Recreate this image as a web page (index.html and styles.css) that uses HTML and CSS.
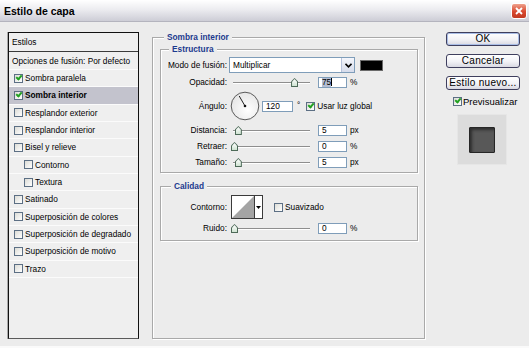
FILE: index.html
```html
<!DOCTYPE html>
<html lang="es">

<head>
  <meta charset="UTF-8" />
  <title>Estilo de capa</title>
  <link rel="stylesheet" href="styles.css">
</head>

<body>
  <!-- Barra de título -->
  <div class="titlebar">
    <span class="title">Estilo de capa</span>
    <span class="close">
      <svg width="8" height="8" viewBox="0 0 8 8"><path d="M1 1L7 7M7 1L1 7" stroke="#fff" stroke-width="1.8" /></svg>
    </span>
  </div>

  <div class="dialog">
    <!-- Lista de estilos -->
    <ul class="styles-list">
      <li class="head">Estilos</li>
      <li class="blend">Opciones de fusión: Por defecto</li>
      <li><span class="cb checked"></span>Sombra paralela</li>
      <li class="active"><span class="cb checked"></span>Sombra interior</li>
      <li><span class="cb"></span>Resplandor exterior</li>
      <li><span class="cb"></span>Resplandor interior</li>
      <li><span class="cb"></span>Bisel y relieve</li>
      <li class="sub"><span class="cb"></span>Contorno</li>
      <li class="sub"><span class="cb"></span>Textura</li>
      <li><span class="cb"></span>Satinado</li>
      <li><span class="cb"></span>Superposición de colores</li>
      <li><span class="cb"></span>Superposición de degradado</li>
      <li><span class="cb"></span>Superposición de motivo</li>
      <li><span class="cb"></span>Trazo</li>
    </ul>

    <!-- Panel central -->
    <fieldset class="group main">
      <legend>Sombra interior</legend>

      <fieldset class="group structure">
        <legend>Estructura</legend>
        <div class="rows">
          <div class="row tall">
            <label>Modo de fusión:</label>
            <div class="select">
              <span class="value">Multiplicar</span>
              <span class="arrow">
                <svg width="7" height="5" viewBox="0 0 7 5"><path d="M0.5 0.8L3.5 3.8L6.5 0.8" fill="none" stroke="#000" stroke-width="1.6" /></svg>
              </span>
            </div>
            <span class="swatch"></span>
          </div>

          <div class="row">
            <label>Opacidad:</label>
            <div class="slider"><span class="thumb" style="left: 78%"></span></div>
            <span class="field"><span class="sel">75</span><span class="caret"></span></span>
            <span class="unit">%</span>
          </div>

          <div class="row dial-row">
            <label>Ángulo:</label>
            <svg class="dial" width="30" height="30" viewBox="0 0 30 30">
              <defs>
                <radialGradient id="dialFill" cx="0.6" cy="0.65" r="0.7">
                  <stop offset="0" stop-color="#ffffff" />
                  <stop offset="1" stop-color="#e4e4e4" />
                </radialGradient>
              </defs>
              <circle cx="15" cy="15" r="13.8" fill="url(#dialFill)" stroke="#5a5a5a" stroke-width="1" />
              <line x1="15" y1="15" x2="9.2" y2="5" stroke="#222" stroke-width="1" />
              <circle cx="15" cy="15" r="1.3" fill="#111" />
            </svg>
            <span class="field angle">120</span>
            <span class="degree">°</span>
            <span class="cb checked"></span>
            <span class="cb-text">Usar luz global</span>
          </div>

          <div class="row">
            <label>Distancia:</label>
            <div class="slider"><span class="thumb" style="left: 5%"></span></div>
            <span class="field">5</span>
            <span class="unit">px</span>
          </div>

          <div class="row">
            <label>Retraer:</label>
            <div class="slider"><span class="thumb" style="left: 0%"></span></div>
            <span class="field">0</span>
            <span class="unit">%</span>
          </div>

          <div class="row">
            <label>Tamaño:</label>
            <div class="slider"><span class="thumb" style="left: 5%"></span></div>
            <span class="field">5</span>
            <span class="unit">px</span>
          </div>
        </div>
      </fieldset>

      <fieldset class="group quality">
        <legend>Calidad</legend>
        <div class="rows">
          <div class="row contour-row">
            <label>Contorno:</label>
            <div class="contour">
              <svg width="22" height="22" viewBox="0 0 22 22">
                <rect width="22" height="22" fill="#fff" />
                <polygon points="0,22 22,0 22,22" fill="#a4a4a4" />
              </svg>
              <span class="contour-arrow">
                <svg width="5" height="3" viewBox="0 0 5 3"><polygon points="0,0 5,0 2.5,3" fill="#000" /></svg>
              </span>
            </div>
            <span class="cb smooth"></span>
            <span class="cb-text">Suavizado</span>
          </div>

          <div class="row">
            <label>Ruido:</label>
            <div class="slider"><span class="thumb" style="left: 0%"></span></div>
            <span class="field">0</span>
            <span class="unit">%</span>
          </div>
        </div>
      </fieldset>
    </fieldset>

    <!-- Botones -->
    <div class="actions">
      <button class="btn default">OK</button>
      <button class="btn">Cancelar</button>
      <button class="btn">Estilo nuevo...</button>
      <div class="preview-toggle"><span class="cb checked"></span>Previsualizar</div>
      <div class="preview">
        <span class="preview-square"></span>
      </div>
    </div>
  </div>
</body>

</html>
```

FILE: styles.css
```css
/* --- Variables --- */
:root {
  --bg: #ececec;
  --text: #000000;
  --legend: #1c3a8e;
  --field-border: #7f9db9;
  --etch-dark: #a9a9a9;
}

* {
  box-sizing: border-box;
}

body {
  margin: 0;
  width: 529px;
  height: 348px;
  overflow: hidden;
  background: var(--bg);
  font-family: "Liberation Sans", Arial, sans-serif;
  font-size: 8.3px;
  color: var(--text);
  border-bottom: 2px solid #fafafa;
}

/* --- Barra de título --- */
.titlebar {
  height: 22px;
  display: flex;
  align-items: center;
  justify-content: space-between;
  padding: 0 2px 0 4px;
  background: linear-gradient(#ffffff, #ececf0 45%, #cdcdd6);
  border-bottom: 1px solid #b4b4be;
}

.title {
  font-size: 10.5px;
  font-weight: bold;
  color: #000;
}

.close {
  width: 16px;
  height: 16px;
  border: 1px solid #fff;
  border-radius: 3px;
  background: linear-gradient(#eea08c, #d9482e 55%, #c23a22);
  display: flex;
  align-items: center;
  justify-content: center;
}

/* --- Layout --- */
.dialog {
  display: flex;
  align-items: flex-start;
  padding: 10px 8px 0 8px;
}

/* --- Lista de estilos --- */
.styles-list {
  list-style: none;
  margin: 0;
  padding: 0;
  width: 131px;
  height: 307px;
  background: #efefef;
  border: 1px solid #111;
  border-bottom-color: #5a5a5a;
  box-shadow: -1px 0 0 #a8a8a8;
}

.styles-list li {
  height: 17.33px;
  display: flex;
  align-items: center;
  gap: 2px;
  padding-left: 5px;
  border-bottom: 1px solid #fbfbfb;
  white-space: nowrap;
}

.styles-list li.head {
  height: 19px;
  padding-left: 3px;
  border-bottom-color: #3a3a3a;
}

.styles-list li.blend {
  height: 18px;
  padding-left: 3px;
}

.styles-list li.active {
  background: #c3c3cd;
  font-weight: bold;
}

.styles-list li.sub {
  padding-left: 15px;
}

/* --- Casillas --- */
.cb {
  flex: none;
  width: 9px;
  height: 9px;
  border: 1px solid #5c6f84;
  background: linear-gradient(135deg, #dcdcd6, #ffffff);
  display: inline-flex;
  align-items: center;
  justify-content: center;
}

.cb.checked::after {
  content: "";
  width: 2px;
  height: 4px;
  margin-top: -2px;
  border: solid #21a121;
  border-width: 0 2px 2px 0;
  transform: rotate(40deg);
}

.cb-text {
  margin-left: 2px;
  white-space: nowrap;
}

/* --- Grupos (fieldset) --- */
.group {
  margin: 0;
  min-width: 0;
  border: 1px solid var(--etch-dark);
  box-shadow: inset 1px 1px 0 #fff, 1px 1px 0 #fff;
}

.group legend {
  padding: 0 3px;
  margin-left: 4px;
  line-height: 11px;
  color: var(--legend);
  font-weight: bold;
  background: var(--bg);
}

.main {
  margin-left: 13px;
  width: 273px;
  height: 307px;
  padding: 1px 6px 0 7px;
}

.structure {
  padding: 2px 4px 3px;
}

.quality {
  margin-top: 8px;
  padding: 3px 4px 5px;
}

.quality legend {
  margin-left: 6px;
}

/* --- Filas de controles --- */
.rows {
  display: flex;
  flex-direction: column;
  gap: 2px;
}

.row {
  display: flex;
  align-items: center;
  height: 14px;
}

.row.tall {
  height: 16px;
}

.row.dial-row {
  height: 30px;
}

.row.contour-row {
  height: 24px;
}

.row label {
  flex: none;
  width: 62px;
  margin-right: 2px;
  text-align: right;
  white-space: nowrap;
}

.select {
  width: 126px;
  height: 16px;
  display: flex;
  align-items: center;
  justify-content: space-between;
  background: #fff;
  border: 1px solid var(--field-border);
  padding-left: 3px;
}

.select .arrow {
  width: 13px;
  height: 14px;
  display: flex;
  align-items: center;
  justify-content: center;
  background: linear-gradient(#f4f6fc, #d6dceb);
  border-left: 1px solid #b7c3dc;
}

.swatch {
  width: 23px;
  height: 11px;
  margin-left: 5px;
  background: #000;
  border: 1px solid #6a6a6a;
}

/* --- Deslizadores --- */
.slider {
  position: relative;
  width: 77px;
  height: 14px;
  margin-left: 4px;
  background: linear-gradient(transparent 7px, #8e8e8e 7px, #8e8e8e 8px, #fff 8px, #fff 9px, transparent 9px);
}

.thumb {
  position: absolute;
  top: 3px;
  width: 7px;
  height: 9px;
  margin-left: -2px;
  background: #4d6a58;
  clip-path: polygon(50% 0, 100% 38%, 100% 100%, 0 100%, 0 38%);
}

.thumb::before {
  content: "";
  position: absolute;
  inset: 1px;
  background: linear-gradient(#ffffff, #cfe3d2);
  clip-path: polygon(50% 0, 100% 38%, 100% 100%, 0 100%, 0 38%);
}

.field {
  width: 29px;
  height: 11px;
  margin-left: 8px;
  padding-left: 3px;
  display: flex;
  align-items: center;
  background: #fff;
  border: 1px solid var(--field-border);
  line-height: 9px;
}

.field .sel {
  background: #b4bdd2;
}

.field .caret {
  width: 1px;
  height: 8px;
  background: #000;
}

.unit {
  margin-left: 3px;
}

.dial {
  margin-left: 1px;
}

.field.angle {
  width: 31px;
  margin-left: 2px;
}

.degree {
  margin-left: 4px;
  margin-right: 6px;
  align-self: flex-start;
  margin-top: 9px;
}

/* --- Contorno --- */
.contour {
  margin-left: 2px;
  width: 32px;
  height: 24px;
  display: flex;
  border: 1px solid #3a3a3a;
  background: #fff;
}

.contour svg {
  display: block;
}

.contour-arrow {
  flex: 1;
  display: flex;
  align-items: center;
  justify-content: center;
  border-left: 1px solid #3a3a3a;
}

.cb.smooth {
  margin-left: 11px;
}

/* --- Botones --- */
.actions {
  margin-left: 21px;
  width: 74px;
  display: flex;
  flex-direction: column;
  font-size: 9.5px;
}

.btn {
  height: 14px;
  padding: 0;
  font-family: inherit;
  font-size: 10px;
  line-height: 12px;
  letter-spacing: 0.3px;
  color: #000;
  border: 1px solid #3f3f5e;
  border-radius: 3px;
  background: linear-gradient(#ffffff, #f2f2f6 55%, #d9d9e2);
}

.btn + .btn {
  margin-top: 8px;
}

.btn.default {
  box-shadow: inset 0 0 0 1px #a9bde6;
}

.preview-toggle {
  margin-top: 5px;
  height: 12px;
  padding-left: 7px;
  display: flex;
  align-items: center;
  gap: 1px;
  white-space: nowrap;
}

.preview {
  margin: 7px 0 0 11px;
  width: 50px;
  height: 51px;
  display: flex;
  align-items: center;
  justify-content: center;
  background: #dcdcdc;
  border: 1px solid #e6e6e6;
}

.preview-square {
  width: 26px;
  height: 26px;
  background: #585858;
  border: 1px solid #262626;
  border-radius: 1px;
  box-shadow: inset 2px 2px 3px #2e2e2e;
}
```
